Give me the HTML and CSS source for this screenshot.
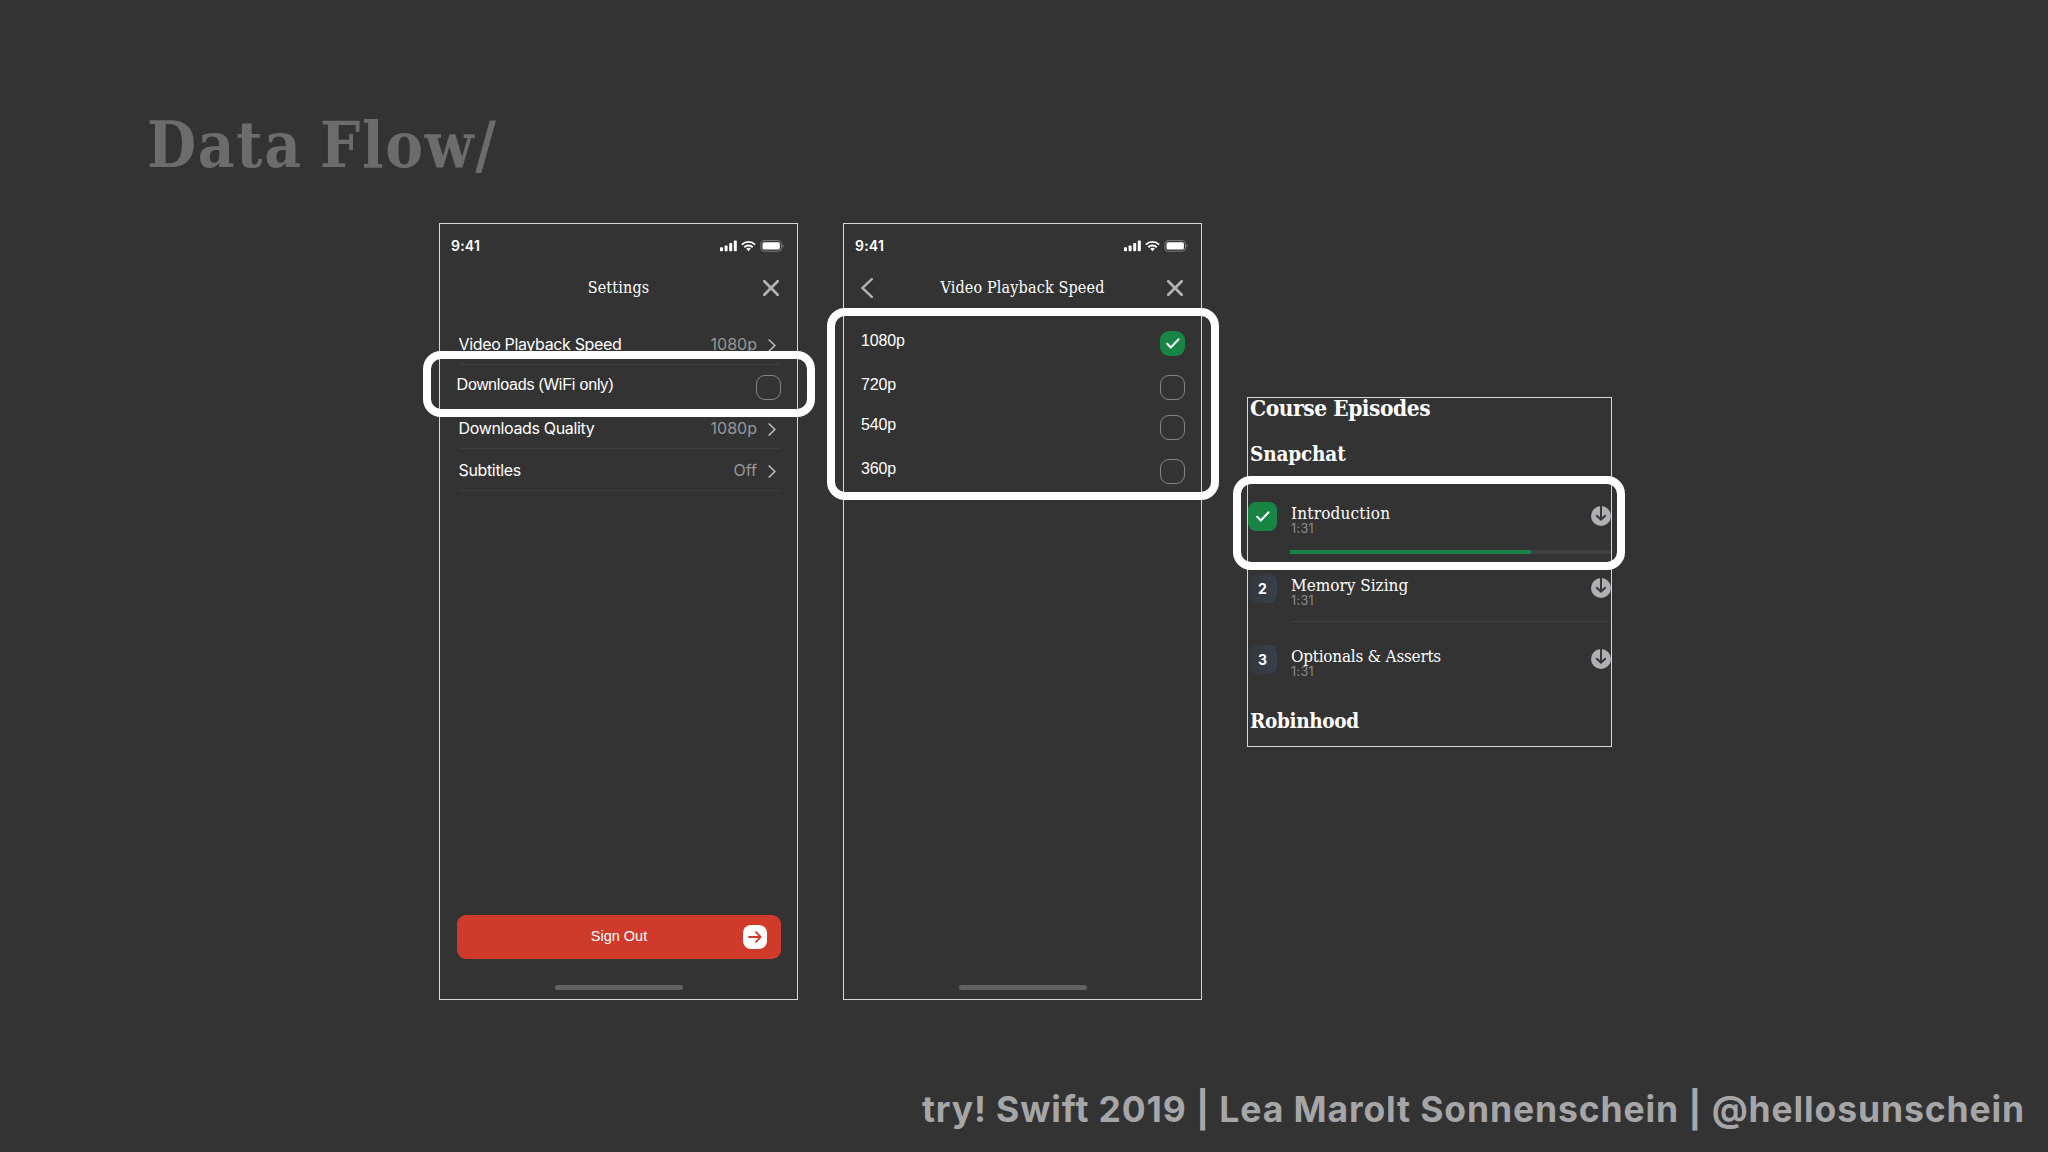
FILE: index.html
```html
<!DOCTYPE html>
<html lang="en">
<head>
  <meta charset="UTF-8" />
  <meta name="viewport" content="width=device-width, initial-scale=1.0"/>
  <title>Data Flow</title>
  <link rel="stylesheet" href="styles.css">
</head>
<body>
  <!-- Shared icons -->
  <svg class="sprite" aria-hidden="true">
    <symbol id="status" viewBox="0 0 64 12">
      <g fill="#fff">
        <rect x="0" y="7.2" width="3" height="4" rx="0.8"/>
        <rect x="4.6" y="5.4" width="3" height="5.8" rx="0.8"/>
        <rect x="9.2" y="3" width="3" height="8.2" rx="0.8"/>
        <rect x="13.8" y="0.6" width="3" height="10.6" rx="0.8"/>
      </g>
      <g fill="none" stroke="#fff" stroke-width="1.9">
        <path d="M21.9 4.6a9.4 9.4 0 0 1 13.2 0"/>
        <path d="M24.3 7.2a6 6 0 0 1 8.4 0"/>
      </g>
      <path d="M28.5 11.2l-2.3-2.4a3.3 3.3 0 0 1 4.6 0z" fill="#fff"/>
      <rect x="40.9" y="0.6" width="20.6" height="10.6" rx="3.2" fill="none" stroke="#7c7c7c"/>
      <rect x="42.5" y="2.2" width="17.4" height="7.4" rx="1.6" fill="#fff"/>
      <path d="M62.6 4.2v3.4q1.2-.5 1.2-1.7t-1.2-1.7z" fill="#7c7c7c"/>
    </symbol>
    <symbol id="close" viewBox="0 0 16 16">
      <path d="M1.3 1.3l13.4 13.4M14.7 1.3L1.3 14.7" fill="none" stroke="#b3b3b3" stroke-width="2.7" stroke-linecap="round"/>
    </symbol>
    <symbol id="back" viewBox="0 0 12 20">
      <path d="M10.8 1.2L1.6 10l9.2 8.8" fill="none" stroke="#b3b3b3" stroke-width="2.4" stroke-linecap="round"/>
    </symbol>
    <symbol id="chevron" viewBox="0 0 8 13">
      <path d="M1.2 1l5.6 5.5L1.2 12" fill="none" stroke="#b8b8b8" stroke-width="1.7" stroke-linecap="round"/>
    </symbol>
    <symbol id="check" viewBox="0 0 14 11">
      <path d="M1.2 5.8l3.6 3.7 7.8-8.2" fill="none" stroke="#fff" stroke-width="2" stroke-linecap="round"/>
    </symbol>
    <symbol id="arrow" viewBox="0 0 14 12">
      <path d="M1 6h11.5M8 1.2L12.7 6 8 10.8" fill="none" stroke="#cf3a2b" stroke-width="1.8" stroke-linecap="round"/>
    </symbol>
    <symbol id="download" viewBox="0 0 20 20">
      <circle cx="10" cy="10" r="10" fill="#afb0b3"/>
      <path d="M10 0v13.6M5.8 9.8l4.2 4 4.2-4" fill="none" stroke="#333334" stroke-width="1.9" stroke-linecap="round"/>
    </symbol>
  </svg>

  <h1>Data Flow/</h1>

  <main>
    <!-- Settings -->
    <section class="phone">
      <div class="status-bar">
        <span>9:41</span>
        <svg class="status-icons"><use href="#status"/></svg>
      </div>
      <header class="nav-bar">
        <h2>Settings</h2>
        <svg class="close"><use href="#close"/></svg>
      </header>
      <ul class="settings">
        <li><span>Video Playback Speed</span><em>1080p</em><svg><use href="#chevron"/></svg></li>
        <li class="toggle"><span>Downloads (WiFi only)</span><i class="box"></i></li>
        <li><span>Downloads Quality</span><em>1080p</em><svg><use href="#chevron"/></svg></li>
        <li><span>Subtitles</span><em>Off</em><svg><use href="#chevron"/></svg></li>
      </ul>
      <button class="sign-out">
        <span>Sign Out</span>
        <i><svg><use href="#arrow"/></svg></i>
      </button>
      <div class="home-bar"></div>
      <div class="highlight highlight-toggle"></div>
    </section>

    <!-- Video Playback Speed -->
    <section class="phone">
      <div class="status-bar">
        <span>9:41</span>
        <svg class="status-icons"><use href="#status"/></svg>
      </div>
      <header class="nav-bar">
        <svg class="back"><use href="#back"/></svg>
        <h2>Video Playback Speed</h2>
        <svg class="close"><use href="#close"/></svg>
      </header>
      <ul class="options">
        <li><span>1080p</span><i class="box checked"><svg><use href="#check"/></svg></i></li>
        <li><span>720p</span><i class="box"></i></li>
        <li><span>540p</span><i class="box"></i></li>
        <li><span>360p</span><i class="box"></i></li>
      </ul>
      <div class="home-bar"></div>
      <div class="highlight highlight-options"></div>
    </section>

    <!-- Course Episodes -->
    <section class="episodes">
      <h2>Course Episodes</h2>
      <h3 class="snapchat">Snapchat</h3>
      <ol>
        <li>
          <i class="badge done"><svg><use href="#check"/></svg></i>
          <div class="info"><b class="loose">Introduction</b><small>1:31</small></div>
          <svg class="download"><use href="#download"/></svg>
          <div class="progress"><div style="width: 75.2%"></div></div>
        </li>
        <li>
          <i class="badge">2</i>
          <div class="info"><b>Memory Sizing</b><small>1:31</small></div>
          <svg class="download"><use href="#download"/></svg>
          <div class="divider"></div>
        </li>
        <li>
          <i class="badge">3</i>
          <div class="info"><b class="tight">Optionals &amp; Asserts</b><small>1:31</small></div>
          <svg class="download"><use href="#download"/></svg>
        </li>
      </ol>
      <h3 class="robinhood">Robinhood</h3>
      <div class="highlight highlight-episode"></div>
    </section>
  </main>

  <footer>try! Swift 2019 | Lea Marolt Sonnenschein | @hellosunschein</footer>
</body>
</html>
```
FILE: styles.css
```css
:root {
  --bg: #333334;
  --frame: #d6d6d6;
  --green: #188544;
  --red: #cf3a2b;
  --muted: #979797;
  --serif: "DejaVu Serif Condensed", "DejaVu Serif", serif;
  --sans: Inter, "Liberation Sans", sans-serif;
}

* {
  box-sizing: border-box;
}

body {
  margin: 0;
  width: 2048px;
  height: 1152px;
  display: flex;
  flex-direction: column;
  overflow: hidden;
  background: var(--bg);
  color: #fff;
  font-family: var(--sans);
}

.sprite {
  display: none;
}

h1, h2, h3 {
  margin: 0;
  font-family: var(--serif);
  white-space: nowrap;
}

h1 {
  height: 223px;
  padding: 105px 0 0 147px;
  font-size: 63px;
  line-height: 80px;
  letter-spacing: 1.7px;
  word-spacing: -4px;
  color: #6c6c6c;
}

ul, ol {
  margin: 0;
  padding: 0;
  list-style: none;
}

i, em {
  font-style: normal;
}

main {
  display: flex;
  align-items: flex-start;
  gap: 45px;
  padding-left: 439px;
}

/* Phones */
.phone {
  position: relative;
  display: flex;
  flex-direction: column;
  width: 359px;
  height: 777px;
  border: 1px solid var(--frame);
}

.status-bar {
  display: flex;
  align-items: center;
  justify-content: space-between;
  height: 43px;
  padding: 0 13px 0 11px;
  font-size: 14px;
  font-weight: 600;
  letter-spacing: 0.2px;
}

.status-icons {
  width: 64px;
  height: 12px;
}

.nav-bar {
  display: grid;
  grid-template-columns: 40px 1fr 40px;
  align-items: center;
  height: 41px;
}

.nav-bar h2 {
  grid-column: 2;
  text-align: center;
  font-size: 16px;
  font-weight: 400;
  letter-spacing: 0.15px;
}

.close {
  width: 16px;
  height: 16px;
  margin-left: 6px;
}

.back {
  width: 12px;
  height: 20px;
  margin-left: 17px;
}

/* Settings list */
.settings {
  margin: 15px 17px 0 18.5px;
  font-size: 16px;
}

.settings li {
  display: flex;
  align-items: center;
  height: 42px;
  padding-right: 4px;
  border-bottom: 1px solid #3e3e3f;
}

.settings span {
  letter-spacing: -0.35px;
}

.settings em {
  margin-left: auto;
  margin-right: 11px;
  color: var(--muted);
}

.settings svg {
  width: 8px;
  height: 13px;
  margin-top: 4px;
}

.settings .toggle {
  justify-content: space-between;
  margin: 0 -1px 0 -2px;
  padding: 0;
  border-bottom-color: transparent;
  font-family: "Liberation Sans", sans-serif;
}

.settings .toggle span {
  margin-top: -2px;
  letter-spacing: -0.15px;
}

.toggle .box {
  margin-top: 4px;
}

.box {
  display: flex;
  align-items: center;
  justify-content: center;
  width: 25px;
  height: 25px;
  border: 1px solid #858585;
  border-radius: 9px;
}

.box.checked {
  border: 0;
  background: var(--green);
}

.box svg {
  width: 14px;
  height: 11px;
}

.sign-out {
  display: grid;
  grid-template-columns: 38px 1fr 38px;
  align-items: center;
  height: 44px;
  margin: auto 16px 0 17px;
  padding: 0;
  border: 0;
  border-radius: 9px;
  background: var(--red);
  color: #fff;
  font: 14.5px "Liberation Sans", sans-serif;
}

.sign-out span {
  grid-column: 2;
  margin-top: -3px;
}

.sign-out i {
  display: flex;
  align-items: center;
  justify-content: center;
  width: 24px;
  height: 24px;
  border-radius: 8px;
  background: #fff;
}

.sign-out svg {
  width: 14px;
  height: 12px;
}

.home-bar {
  width: 128px;
  height: 5px;
  margin: 26px auto 9px;
  border-radius: 3px;
  background: #626262;
}

/* Playback options */
.options {
  margin: 23px 16px auto 17px;
  font: 16px "Liberation Sans", sans-serif;
}

.options li {
  display: flex;
  align-items: center;
  justify-content: space-between;
  height: 25px;
  margin-bottom: 19px;
}

.options li:nth-child(2) {
  margin-bottom: 15px;
}

.options span {
  margin-top: -5px;
  letter-spacing: -0.15px;
}

/* White frames over the screens */
.highlight {
  position: absolute;
  width: 392px;
  border: 8px solid #fff;
  border-radius: 18px;
}

.highlight-toggle {
  left: -17px;
  top: 127px;
  height: 66px;
}

.highlight-options {
  left: -17px;
  top: 84px;
  height: 192px;
}

.highlight-episode {
  left: -15px;
  top: 78px;
  height: 94px;
}

/* Episodes */
.episodes {
  position: relative;
  width: 365px;
  height: 350px;
  margin-top: 174px;
  border: 1px solid var(--frame);
}

.episodes h2,
.episodes h3 {
  padding-left: 2px;
}

.episodes h2 {
  height: 22px;
  font-size: 22.5px;
  line-height: 21px;
  letter-spacing: -0.45px;
}

.episodes h3 {
  height: 20px;
  font-size: 20.5px;
  line-height: 20px;
  letter-spacing: -0.15px;
}

.snapchat {
  margin-top: 24px;
}

.episodes .robinhood {
  margin-top: -6px;
  letter-spacing: -0.35px;
}

.episodes ol {
  margin-top: 38px;
}

.episodes li {
  display: grid;
  grid-template-columns: 29px 1fr 20px;
  column-gap: 14px;
  align-content: start;
  align-items: center;
  height: 71.5px;
}

.badge {
  display: flex;
  align-items: center;
  justify-content: center;
  width: 29px;
  height: 29px;
  border-radius: 8px;
  background: linear-gradient(90deg, #34373c, #37404b);
  font-size: 14px;
  font-weight: 700;
}

.badge.done {
  background: var(--green);
}

.badge svg {
  width: 14px;
  height: 11px;
}

.info {
  display: flex;
  flex-direction: column;
  height: 29px;
}

.info b {
  font: 400 17px/22px var(--serif);
  white-space: nowrap;
}

.info .loose {
  letter-spacing: 0.2px;
}

.info .tight {
  letter-spacing: -0.25px;
}

.info small {
  margin-top: -1px;
  font-size: 12.5px;
  line-height: 11px;
  letter-spacing: 0.4px;
  color: #8d8d8d;
}

.download {
  width: 20px;
  height: 20px;
  margin-top: -1px;
}

.progress {
  grid-column: 2 / 4;
  height: 4px;
  margin: 19px 0 0 -1px;
  background: #404042;
}

.progress div {
  height: 100%;
  background: var(--green);
}

.divider {
  grid-column: 2 / 4;
  height: 1px;
  margin: 18px 2px 0 0;
  background: #3f3f40;
}

/* Footer */
footer {
  margin-top: auto;
  padding: 0 23px 17px 0;
  text-align: right;
  font-size: 35.5px;
  font-weight: 700;
  line-height: 50px;
  letter-spacing: 0.88px;
  color: #a6a6a8;
  white-space: nowrap;
}
```
